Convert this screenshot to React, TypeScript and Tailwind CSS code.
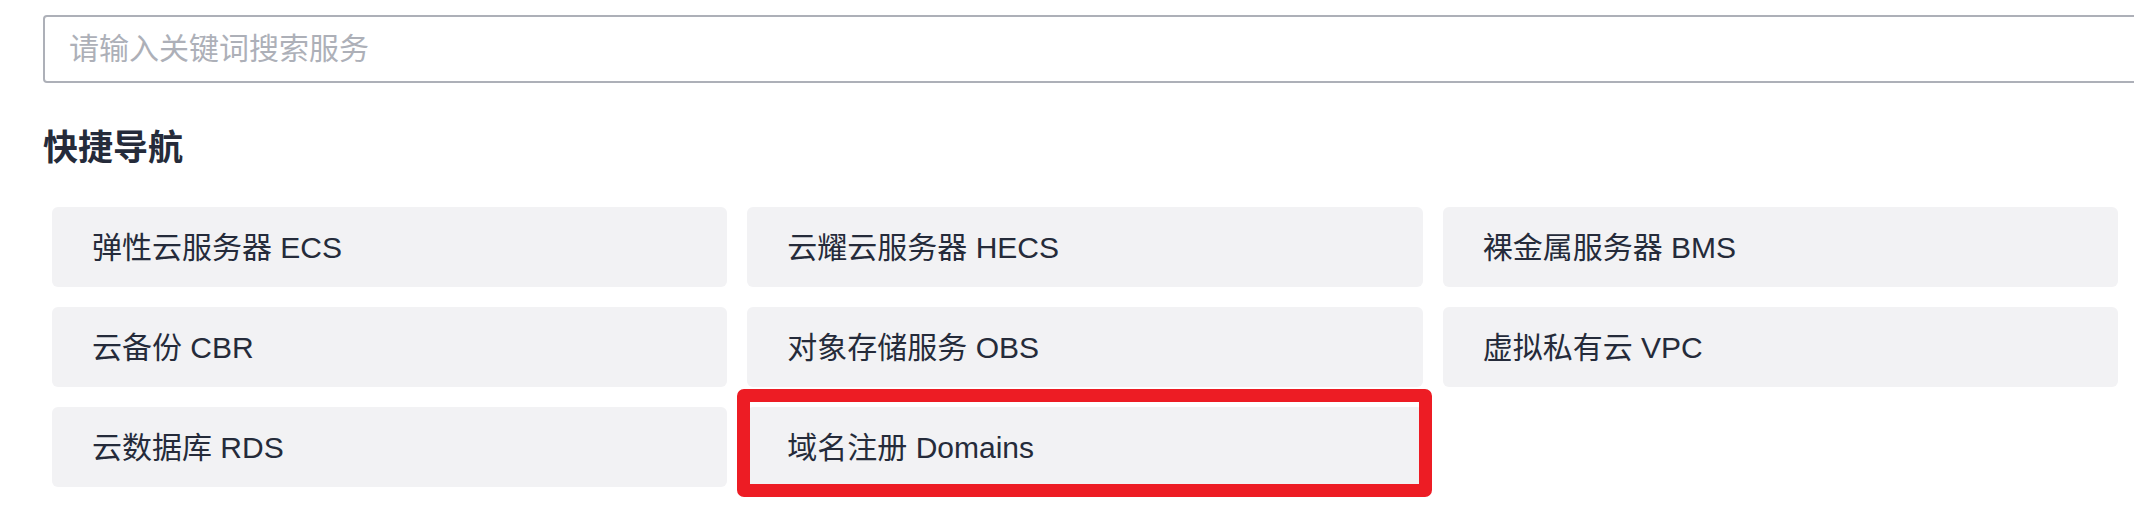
import React from "react";

const items = [
  "弹性云服务器 ECS",
  "云耀云服务器 HECS",
  "裸金属服务器 BMS",
  "云备份 CBR",
  "对象存储服务 OBS",
  "虚拟私有云 VPC",
  "云数据库 RDS",
  "域名注册 Domains",
];

export default function App() {
  return (
    <div
      className="w-[2134px] h-[508px] overflow-hidden bg-white pl-[43px] pt-[15px]"
      style={{ fontFamily: '"Liberation Sans", "Noto Sans CJK SC", sans-serif' }}
    >
      <input
        type="text"
        placeholder="请输入关键词搜索服务"
        className="block h-[68px] w-[2200px] rounded-[4px] border-2 border-[#adb0b8] bg-white pl-[24px] text-[30px] text-[#252b3a] outline-none placeholder:text-[#adb0b8]"
      />
      <h2 className="mt-[45px] h-[40px] text-[35px] font-bold leading-[40px] text-[#252b3a]">
        快捷导航
      </h2>
      <div className="mt-[39px] ml-[9px] grid w-[2066px] grid-cols-3 gap-x-[20px] gap-y-[20px]">
        {items.map((label, i) => (
          <div
            key={label}
            className="relative flex h-[80px] items-center rounded-[6px] bg-[#f2f2f4] pl-[40px] text-[30px] text-[#252b3a]"
          >
            {label}
            {i === 7 && (
              <div className="pointer-events-none absolute -left-[10px] -right-[9px] -top-[18px] -bottom-[10px] rounded-[7px] border-[13px] border-[#ed1c24]" />
            )}
          </div>
        ))}
      </div>
    </div>
  );
}
